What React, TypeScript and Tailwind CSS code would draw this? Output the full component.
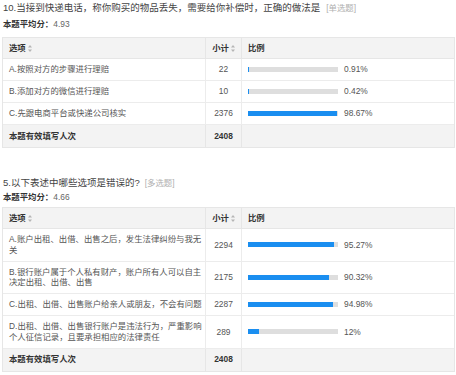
import React from "react";

const font = { fontFamily: '"Liberation Sans", "Noto Sans CJK SC", sans-serif' };

function Sort() {
  return (
    <svg width="4" height="7" viewBox="0 0 4 7" className="ml-[2px] inline-block align-middle">
      <path d="M2 0 L4 2.6 L0 2.6 Z" fill="#b5b5b5" />
      <path d="M2 7 L4 4.4 L0 4.4 Z" fill="#b5b5b5" />
    </svg>
  );
}

type Row = { label: string; count: number; pct: string; val: number };

function Table({ rows, total }: { rows: Row[]; total: number }) {
  return (
    <div className="ml-[2px] w-[453px] border border-[#e6e6e6] text-[8.4px] leading-[10.5px] text-[#555]">
      <div className="flex bg-[#f3f3f3] border-b border-[#e6e6e6] h-[21px] items-center font-bold text-[#333]">
        <div className="w-[203px] pl-[6px] border-r border-[#e6e6e6] h-full flex items-center">
          选项<Sort />
        </div>
        <div className="w-[36px] border-r border-[#e6e6e6] h-full flex items-center justify-center">
          小计<Sort />
        </div>
        <div className="flex-1 pl-[6px]">比例</div>
      </div>
      {rows.map((r) => (
        <div key={r.label} className="flex border-b border-[#ececec] bg-white">
          <div className="w-[203px] pl-[6px] pr-[2px] py-[5.25px] border-r border-[#ececec]">{r.label}</div>
          <div className="w-[36px] border-r border-[#ececec] flex items-center justify-center">{r.count}</div>
          <div className="flex-1 pl-[6px] flex items-center">
            <div className="w-[90px] h-[5px] bg-[#dedede]">
              <div className="h-full bg-[#1a8ef0]" style={{ width: `${Math.max(r.val, 1)}%` }} />
            </div>
            <span className="ml-[6px]">{r.pct}</span>
          </div>
        </div>
      ))}
      <div className="flex bg-[#f3f3f3] h-[22px] items-center font-bold text-[#333]">
        <div className="w-[203px] pl-[6px] border-r border-[#e6e6e6] h-full flex items-center">本题有效填写人次</div>
        <div className="w-[36px] border-r border-[#e6e6e6] h-full flex items-center justify-center">{total}</div>
        <div className="flex-1" />
      </div>
    </div>
  );
}

export default function App() {
  const q1: Row[] = [
    { label: "A.按照对方的步骤进行理赔", count: 22, pct: "0.91%", val: 0.91 },
    { label: "B.添加对方的微信进行理赔", count: 10, pct: "0.42%", val: 0.42 },
    { label: "C.先跟电商平台或快递公司核实", count: 2376, pct: "98.67%", val: 98.67 },
  ];
  const q2: Row[] = [
    { label: "A.账户出租、出借、出售之后，发生法律纠纷与我无关", count: 2294, pct: "95.27%", val: 95.27 },
    { label: "B.银行账户属于个人私有财产，账户所有人可以自主决定出租、出借、出售", count: 2175, pct: "90.32%", val: 90.32 },
    { label: "C.出租、出借、出售账户给亲人或朋友，不会有问题", count: 2287, pct: "94.98%", val: 94.98 },
    { label: "D.出租、出借、出售银行账户是违法行为，严重影响个人征信记录，且要承担相应的法律责任", count: 289, pct: "12%", val: 12 },
  ];
  return (
    <div className="w-[456px] h-[375px] bg-white overflow-hidden" style={font}>
      <div className="pt-[2px] pl-[3px] text-[9.5px] leading-[12px] text-[#444]">
        10.当接到快递电话，称你购买的物品丢失，需要给你补偿时，正确的做法是
        <span className="ml-[6px] text-[8.4px] text-[#b0b0b0]">[单选题]</span>
      </div>
      <div className="mt-[5px] pl-[3px] text-[8.4px] leading-[11px] text-[#333]">
        <span className="font-bold">本题平均分：</span>
        <span className="text-[#666]">4.93</span>
      </div>
      <div className="mt-[7px]">
        <Table rows={q1} total={2408} />
      </div>
      <div className="mt-[29px] pl-[3px] text-[9.5px] leading-[12px] text-[#444]">
        5.以下表述中哪些选项是错误的?
        <span className="ml-[5px] text-[8.4px] text-[#b0b0b0]">[多选题]</span>
      </div>
      <div className="mt-[3px] pl-[3px] text-[8.4px] leading-[11px] text-[#333]">
        <span className="font-bold">本题平均分：</span>
        <span className="text-[#666]">4.66</span>
      </div>
      <div className="mt-[4px]">
        <Table rows={q2} total={2408} />
      </div>
    </div>
  );
}
